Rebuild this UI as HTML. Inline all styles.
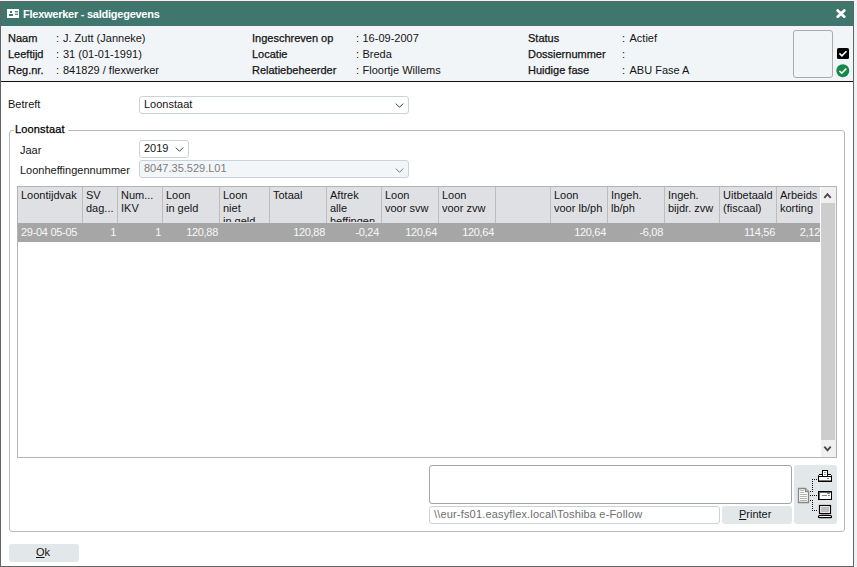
<!DOCTYPE html>
<html><head><meta charset="utf-8">
<style>
*{margin:0;padding:0;box-sizing:border-box}
html,body{width:857px;height:567px;overflow:hidden;background:#eff3f3}
body{font-family:"Liberation Sans",sans-serif;font-size:11px;color:#141414;position:relative}
.a{position:absolute;white-space:nowrap;line-height:13px}
#win{position:absolute;left:0;top:1px;width:854px;height:566px;background:#fff;border:1px solid #636363}
#title{position:absolute;left:1px;top:2px;width:852px;height:24px;background:#3f776f}
#hdr{position:absolute;left:1px;top:26px;width:852px;height:55px;background:#f2f5f8}
#hline{position:absolute;left:1px;top:81px;width:852px;height:1px;background:#111}
.lbl{-webkit-text-stroke:0.25px #141414}
.sel{position:absolute;border:1px solid #c9d3db;border-radius:3px;background:#fff}
.chev{position:absolute;width:9px;height:5px}
.grp{position:absolute;border:1px solid #b9b9b9;border-radius:3px}
.th{position:absolute;top:187px;height:36px;background:#dfe0e4}
.sep{position:absolute;top:187px;width:1px;height:36px;background:#bcbcbe}
.hd{position:absolute;top:189px;line-height:13px;white-space:normal;overflow:hidden;height:33px}
.v{position:absolute;top:226px;line-height:13px;text-align:right;color:#fff;white-space:nowrap;letter-spacing:-0.3px;color:#f8f8f8}
.btn{position:absolute;background:#e2e7ea;border-radius:3px}
</style></head><body>
<div id="win"></div>
<div id="title"></div>
<!-- title icon -->
<svg class="a" style="left:7px;top:8px" width="12" height="11" viewBox="0 0 12 11" shape-rendering="crispEdges">
<rect x="0" y="0.5" width="12" height="9.5" fill="#fff"/>
<rect x="3" y="3" width="2" height="2" fill="#3f776f"/>
<rect x="2" y="6" width="4" height="2" fill="#3f776f"/>
<rect x="8" y="4" width="3" height="2" fill="#b9cfcb"/>
<rect x="8" y="3" width="3" height="1" fill="#4f837b"/>
<rect x="8" y="6" width="3" height="1" fill="#4f837b"/>
</svg>
<div class="a" style="left:23px;top:8px;color:#fff;font-weight:bold;letter-spacing:-0.25px">Flexwerker - saldigegevens</div>
<!-- close X -->
<svg class="a" style="left:836px;top:9px" width="10" height="9" viewBox="0 0 10 9">
<path d="M1.7 1.5 L8.3 7.7 M8.3 1.5 L1.7 7.7" stroke="#fff" stroke-width="2.7" stroke-linecap="round"/>
</svg>
<div id="hdr"></div>
<div id="hline"></div>

<div class="a lbl" style="left:8px;top:32px">Naam</div>
<div class="a lbl" style="left:8px;top:48px">Leeftijd</div>
<div class="a lbl" style="left:8px;top:64px">Reg.nr.</div>
<div class="a" style="left:56px;top:32px">:</div><div class="a" style="left:63px;top:32px">J. Zutt (Janneke)</div>
<div class="a" style="left:56px;top:48px">:</div><div class="a" style="left:63px;top:48px">31 (01-01-1991)</div>
<div class="a" style="left:56px;top:64px">:</div><div class="a" style="left:63px;top:64px">841829 / flexwerker</div>

<div class="a lbl" style="left:252px;top:32px">Ingeschreven op</div>
<div class="a lbl" style="left:252px;top:48px">Locatie</div>
<div class="a lbl" style="left:252px;top:64px">Relatiebeheerder</div>
<div class="a" style="left:356px;top:32px">:</div><div class="a" style="left:362.5px;top:32px">16-09-2007</div>
<div class="a" style="left:356px;top:48px">:</div><div class="a" style="left:362.5px;top:48px">Breda</div>
<div class="a" style="left:356px;top:64px">:</div><div class="a" style="left:362.5px;top:64px">Floortje Willems</div>

<div class="a lbl" style="left:528px;top:32px">Status</div>
<div class="a lbl" style="left:528px;top:48px">Dossiernummer</div>
<div class="a lbl" style="left:528px;top:64px">Huidige fase</div>
<div class="a" style="left:622px;top:32px">:</div><div class="a" style="left:629.5px;top:32px">Actief</div>
<div class="a" style="left:622px;top:48px">:</div>
<div class="a" style="left:622px;top:64px">:</div><div class="a" style="left:629.5px;top:64px">ABU Fase A</div>

<div class="a" style="left:793px;top:30px;width:40px;height:48px;border:1px solid #aaa;border-radius:3px"></div>
<svg class="a" style="left:837px;top:48px" width="12" height="11" viewBox="0 0 12 11">
<rect x="0" y="0" width="12" height="11" rx="1.5" fill="#000"/>
<path d="M2.4 5.4 L4.9 7.9 L9.5 3.2" stroke="#fff" stroke-width="1.6" fill="none"/>
</svg>
<svg class="a" style="left:836px;top:64px" width="14" height="14" viewBox="0 0 14 14">
<circle cx="6.8" cy="6.7" r="6.5" fill="#158a48"/>
<path d="M3.4 7 L5.8 9.2 L10.2 4.6" stroke="#fff" stroke-width="1.6" fill="none"/>
</svg>

<!-- Betreft -->
<div class="a" style="left:8px;top:98px">Betreft</div>
<div class="sel" style="left:139px;top:96px;width:270px;height:18px"></div>
<div class="a" style="left:144px;top:98px">Loonstaat</div>
<svg class="chev" style="left:395px;top:103px" viewBox="0 0 9 5"><path d="M0.8 0.6 L4.5 4.3 L8.2 0.6" stroke="#3a3a3a" stroke-width="1" fill="none"/></svg>

<!-- group -->
<div class="grp" style="left:9px;top:130px;width:836px;height:402px"></div>
<div class="a" style="left:14px;top:123px;background:#fff;padding:0 3px 0 1px;letter-spacing:0.15px;-webkit-text-stroke:0.25px #000;color:#000">Loonstaat</div>

<div class="a" style="left:20px;top:144px">Jaar</div>
<div class="sel" style="left:139px;top:140px;width:50px;height:18px"></div>
<div class="a" style="left:144px;top:142px">2019</div>
<svg class="chev" style="left:175px;top:147px" viewBox="0 0 9 5"><path d="M0.8 0.6 L4.5 4.3 L8.2 0.6" stroke="#3a3a3a" stroke-width="1" fill="none"/></svg>

<div class="a" style="left:20px;top:164px">Loonheffingennummer</div>
<div class="sel" style="left:139px;top:160px;width:270px;height:18px;background:#f3f6f8"></div>
<div class="a" style="left:144px;top:162px;color:#7d7d7d">8047.35.529.L01</div>
<svg class="chev" style="left:395px;top:168px" viewBox="0 0 9 5"><path d="M0.8 0.6 L4.5 4.3 L8.2 0.6" stroke="#777" stroke-width="1" fill="none"/></svg>

<!-- table -->
<div class="a" style="left:17px;top:186px;width:820px;height:272px;border:1px solid #b4b4b4"></div>
<div class="th" style="left:18px;width:802px"></div>
<div class="a" style="left:18px;top:223px;width:802px;height:19px;background:#a6a6a6"></div>

<div class="sep" style="left:82px"></div>
<div class="sep" style="left:117px"></div>
<div class="sep" style="left:162px"></div>
<div class="sep" style="left:219px"></div>
<div class="sep" style="left:269px"></div>
<div class="sep" style="left:326px"></div>
<div class="sep" style="left:381px"></div>
<div class="sep" style="left:438px"></div>
<div class="sep" style="left:495px"></div>
<div class="sep" style="left:550px"></div>
<div class="sep" style="left:607px"></div>
<div class="sep" style="left:664px"></div>
<div class="sep" style="left:719px"></div>
<div class="sep" style="left:776px"></div>

<div class="hd" style="left:21px;width:60px">Loontijdvak</div>
<div class="hd" style="left:86px;width:30px">SV<br>dag...</div>
<div class="hd" style="left:121px;width:40px">Num...<br>IKV</div>
<div class="hd" style="left:166px;width:52px">Loon<br>in geld</div>
<div class="hd" style="left:223px;width:45px">Loon<br>niet<br>in geld</div>
<div class="hd" style="left:273px;width:52px">Totaal</div>
<div class="hd" style="left:330px;width:50px">Aftrek<br>alle<br>heffingen</div>
<div class="hd" style="left:385px;width:52px">Loon<br>voor svw</div>
<div class="hd" style="left:442px;width:52px">Loon<br>voor zvw</div>
<div class="hd" style="left:554px;width:52px">Loon<br>voor lb/ph</div>
<div class="hd" style="left:611px;width:52px">Ingeh.<br>lb/ph</div>
<div class="hd" style="left:668px;width:52px">Ingeh.<br>bijdr. zvw</div>
<div class="hd" style="left:723px;width:52px">Uitbetaald<br>(fiscaal)</div>
<div class="hd" style="left:780px;width:39px">Arbeids<br>korting</div>

<div class="v" style="left:21px;text-align:left">29-04 05-05</div>
<div class="v" style="left:82px;width:34px">1</div>
<div class="v" style="left:117px;width:44px">1</div>
<div class="v" style="left:162px;width:56px">120,88</div>
<div class="v" style="left:269px;width:56px">120,88</div>
<div class="v" style="left:326px;width:53px">-0,24</div>
<div class="v" style="left:381px;width:56px">120,64</div>
<div class="v" style="left:438px;width:56px">120,64</div>
<div class="v" style="left:550px;width:56px">120,64</div>
<div class="v" style="left:607px;width:56px">-6,08</div>
<div class="v" style="left:719px;width:56px">114,56</div>
<div style="position:absolute;left:776px;top:223px;width:44px;height:19px;overflow:hidden"><div class="v" style="left:0;top:3px;width:44px">2,12</div></div>

<!-- scrollbar -->
<div class="a" style="left:820px;top:187px;width:16px;height:270px;background:#f0f0f0;border-left:1px solid #fff"></div>
<div class="a" style="left:821px;top:203px;width:14px;height:237px;background:#cdcdcd"></div>
<svg class="a" style="left:823px;top:192px" width="9" height="8" viewBox="0 0 9 8"><path d="M1.3 5.9 L4.5 2.1 L7.7 5.9" stroke="#4a4a4a" stroke-width="1.9" fill="none"/></svg>
<svg class="a" style="left:823px;top:445px" width="9" height="8" viewBox="0 0 9 8"><path d="M1.3 1.6 L4.5 5.4 L7.7 1.6" stroke="#4a4a4a" stroke-width="1.9" fill="none"/></svg>

<!-- printer area -->
<div class="a" style="left:429px;top:465px;width:363px;height:39px;border:1px solid #a4a4a4;border-radius:3px"></div>
<div class="sel" style="left:429px;top:506px;width:291px;height:18px"></div>
<div class="a" style="left:434px;top:508px;color:#6e6e6e;letter-spacing:0.17px">\\eur-fs01.easyflex.local\Toshiba e-Follow</div>
<div class="btn" style="left:722px;top:506px;width:70px;height:18px"></div>
<div class="a" style="left:739px;top:508px"><u>P</u>rinter</div>
<div class="btn" style="left:794px;top:465px;width:43px;height:59px"></div>
<svg class="a" style="left:795px;top:466px" width="42" height="56" viewBox="0 0 42 56" shape-rendering="crispEdges">
<g fill="#111"><rect x="17" y="13" width="1" height="1"/><rect x="17" y="15" width="1" height="1"/><rect x="17" y="17" width="1" height="1"/><rect x="17" y="19" width="1" height="1"/><rect x="17" y="21" width="1" height="1"/><rect x="17" y="23" width="1" height="1"/><rect x="17" y="25" width="1" height="1"/><rect x="19" y="13" width="1" height="1"/><rect x="21" y="13" width="1" height="1"/><rect x="15" y="29" width="1" height="1"/><rect x="15" y="25" width="1" height="1"/><rect x="15" y="34" width="1" height="1"/><rect x="17" y="29" width="1" height="1"/><rect x="19" y="29" width="1" height="1"/><rect x="21" y="29" width="1" height="1"/><rect x="17" y="34" width="1" height="1"/><rect x="17" y="36" width="1" height="1"/><rect x="17" y="38" width="1" height="1"/><rect x="17" y="40" width="1" height="1"/><rect x="17" y="42" width="1" height="1"/><rect x="17" y="44" width="1" height="1"/><rect x="19" y="44" width="1" height="1"/><rect x="21" y="44" width="1" height="1"/></g>
</svg>
<svg class="a" style="left:795px;top:466px" width="42" height="56" viewBox="0 0 42 56">
<path d="M3.5 22.5 H10.5 L13.5 25.5 V36.5 H3.5 Z" fill="#fff" stroke="#868686" stroke-width="1.3"/>
<path d="M10.5 22.5 V25.5 H13.5" fill="#e8e8e8" stroke="#868686" stroke-width="1.3"/>
<g fill="#b4b4b4"><rect x="5" y="24" width="4" height="1"/><rect x="5" y="26" width="4" height="1"/><rect x="5" y="28" width="7" height="1"/><rect x="5" y="30" width="7" height="1"/><rect x="5" y="32" width="7" height="1"/><rect x="5" y="34" width="7" height="1"/></g>
<g shape-rendering="crispEdges">
<rect x="24" y="8" width="12" height="1" fill="#000"/>
<rect x="24" y="9" width="12" height="1" fill="#fff"/>
<rect x="23" y="9" width="1" height="1" fill="#444"/><rect x="36" y="9" width="1" height="1" fill="#444"/>
<rect x="23" y="10" width="14" height="1" fill="#000"/>
<rect x="24" y="11" width="12" height="4" fill="#fff"/>
<rect x="23" y="11" width="1" height="5" fill="#000"/><rect x="36" y="11" width="1" height="5" fill="#000"/>
<rect x="23" y="15" width="14" height="1" fill="#000"/>
<rect x="24" y="14" width="12" height="1" fill="#777"/>
<rect x="27" y="4" width="6" height="7" fill="#000"/>
<rect x="28" y="5" width="4" height="5" fill="#fff"/>
<rect x="29" y="6" width="2" height="1" fill="#999"/><rect x="29" y="8" width="2" height="1" fill="#999"/>
<rect x="32" y="12" width="2" height="1" fill="#888"/>
</g>
<g shape-rendering="crispEdges"><rect x="23" y="25" width="14" height="9" fill="#000"/><rect x="24" y="26" width="12" height="7" fill="#6a6a6a"/><rect x="24.5" y="26.5" width="11" height="6" fill="#fff"/></g>
<g fill="#888"><rect x="32" y="27" width="3" height="1"/><rect x="27" y="29" width="5" height="1"/><rect x="33" y="29" width="2" height="1"/></g>
<rect x="24.5" y="39.5" width="11" height="8" fill="#fff" stroke="#000" stroke-width="1.2"/>
<rect x="26" y="41" width="8" height="5" fill="#bdbdbd"/>
<rect x="26" y="48" width="8" height="1" fill="#9a9a9a"/>
<rect x="23.5" y="49.5" width="13" height="2.2" rx="1" fill="#fff" stroke="#000" stroke-width="1.2"/>
</svg>

<!-- OK -->
<div class="btn" style="left:9px;top:544px;width:70px;height:18px"></div>
<div class="a" style="left:36px;top:546px"><u>O</u>k</div>
</body></html>
